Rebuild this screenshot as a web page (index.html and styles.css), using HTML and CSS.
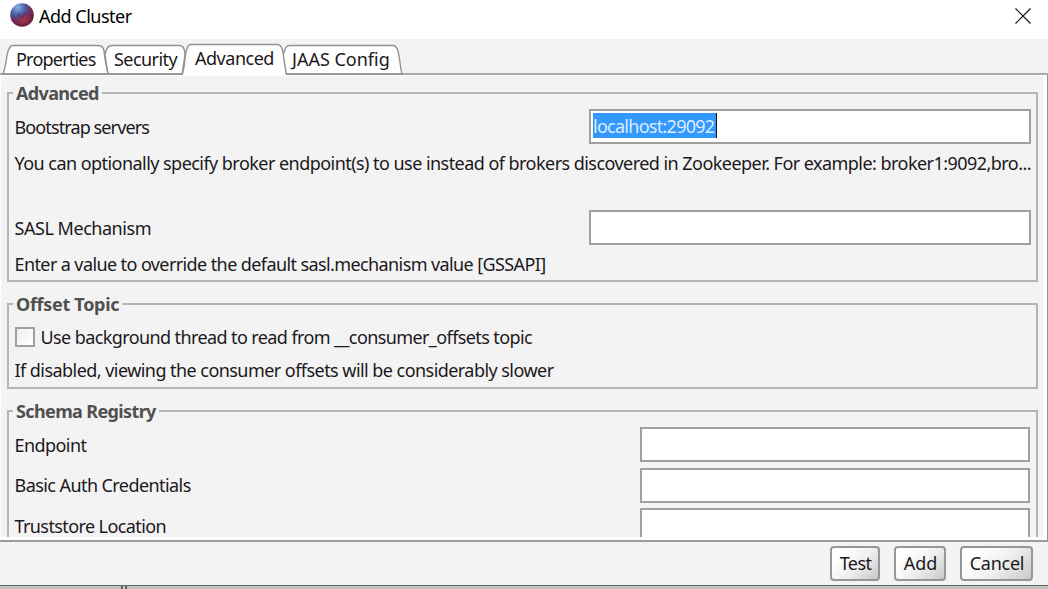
FILE: index.html
```html
<!DOCTYPE html>
<html lang="en">
<head>
<meta charset="utf-8">
<title>Add Cluster</title>
<link rel="stylesheet" href="styles.css">
</head>
<body>
<div class="dialog">
  <header class="titlebar">
    <svg class="logo" width="24" height="24" viewBox="0 0 24 24">
      <defs>
        <radialGradient id="ball" cx="32%" cy="18%" r="85%">
          <stop offset="0" stop-color="#85b4e2"/><stop offset=".4" stop-color="#4a589f"/>
          <stop offset=".7" stop-color="#78284f"/><stop offset="1" stop-color="#5c1a3c"/>
        </radialGradient>
        <radialGradient id="glow"><stop offset="0" stop-color="#b33a4d"/><stop offset="1" stop-color="#94304a" stop-opacity="0"/></radialGradient>
      </defs>
      <circle cx="12" cy="12" r="11.8" fill="url(#ball)"/>
      <ellipse cx="14" cy="17" rx="9" ry="7" fill="url(#glow)"/>
      <path d="M8 10l2 4 3-1 3-3M13 13l1 4" fill="none" stroke="#552c60" stroke-width="1.3" opacity=".6"/>
    </svg>
    <h1 class="title">Add Cluster</h1>
    <svg class="close" width="16" height="16" viewBox="0 0 16 16"><path d="M.5.5l15 15M15.5.5l-15 15" stroke="#111" stroke-width="1.2"/></svg>
  </header>
  <nav class="tabs">
    <svg class="tab-shapes" width="1048" height="36" viewBox="0 39 1048 36">
      <g fill="#fff" stroke="#929292" stroke-width="1.4">
        <path d="M3 74C7 65 6 45.5 13 45.5H98C105 45.5 104 52 105 59L108 74Z"/>
        <path d="M108 74L105 55C106 50 107 45.5 112 45.5H179C184 45.5 185 50 185 55L182 74Z"/>
        <path d="M286 74L283 56C285 49 285 45.5 290 45.5H393C400 45.5 399 63 402 74Z"/>
      </g>
      <path d="M0 74H182M286 74H1048" stroke="#929292" stroke-width="1.6"/>
      <path d="M182 75C186 65 184 44.5 191 44.5H277C283 44.5 283 53 284 60L286.500 75" fill="#fff" stroke="#929292" stroke-width="1.4"/>
    </svg>
    <span class="tab tab-properties">Properties</span>
    <span class="tab tab-security">Security</span>
    <span class="tab tab-advanced">Advanced</span>
    <span class="tab tab-jaas">JAAS Config</span>
  </nav>
  <main class="panel">
    <div class="content">
      <section class="group group-advanced">
        <h2 class="legend legend-advanced">Advanced</h2>
        <div class="row row-first"><span class="w-bootstrap">Bootstrap servers</span><div class="field"><span class="selection">localhost:29092</span></div></div>
        <p class="note note-brokers"><span class="w-brokers">You can optionally specify broker endpoint(s) to use instead of brokers discovered in Zookeeper. For example: broker1:9092,bro...</span></p>
        <div class="row"><span class="w-sasl">SASL Mechanism</span><div class="field"></div></div>
        <p class="note"><span class="w-override">Enter a value to override the default sasl.mechanism value [GSSAPI]</span></p>
      </section>
      <section class="group group-offset">
        <h2 class="legend legend-offset">Offset Topic</h2>
        <div class="check-row"><span class="checkbox"></span><span class="w-thread">Use background thread to read from __consumer_offsets topic</span></div>
        <p class="note note-disabled"><span class="w-disabled">If disabled, viewing the consumer offsets will be considerably slower</span></p>
      </section>
      <section class="group group-schema">
        <h2 class="legend legend-schema">Schema Registry</h2>
        <div class="row"><span class="w-endpoint">Endpoint</span><div class="field"></div></div>
        <div class="row"><span class="w-basic">Basic Auth Credentials</span><div class="field"></div></div>
        <div class="row"><span class="w-trust">Truststore Location</span><div class="field"></div></div>
      </section>
    </div>
  </main>
  <footer class="actions">
    <button class="button button-test">Test</button>
    <button class="button button-add">Add</button>
    <button class="button button-cancel">Cancel</button>
  </footer>
  <div class="backdrop"></div>
</div>
</body>
</html>
```
FILE: styles.css
```css
* { box-sizing: border-box; }
body { margin: 0; font: 18px/24px "Noto Sans", sans-serif; color: #1c1820; letter-spacing: -.57px; }
h1, h2, p { margin: 0; font-weight: 400; }
.dialog { width: 1048px; height: 589px; overflow: hidden; background: #f3f3f3; display: flex; flex-direction: column; white-space: nowrap; }
.titlebar { height: 39px; flex: none; background: #fff; display: flex; align-items: flex-start; padding: 3px 17px 0 10px; }
.title { font-size: 18px; line-height: 27px; margin-left: 5px; color: #000; letter-spacing: -.5px; }
.close { margin: 5px 0 0 auto; }
.tabs { position: relative; height: 36px; flex: none; display: flex; padding: 8px 0 0 16px; }
.tab-shapes { position: absolute; left: 0; top: 0; }
.tab { position: relative; }
.tab-properties { width: 98px; letter-spacing: -.79px; }
.tab-security { width: 81px; }
.tab-advanced { width: 97px; margin-top: -1px; letter-spacing: -.48px; }
.tab-jaas { letter-spacing: 0; }
.panel { height: 465px; flex: none; background: #fff; padding: 1px 4px 3px 1px; border-right: 1px solid #929292; }
.content { height: 461px; overflow: hidden; background: #f3f3f3; padding: 16px 5px 0 6px; }
.group { border: 2px solid #b4b4b4; position: relative; padding-left: 5.5px; }
.group-advanced { height: 190px; padding-right: 5px; }
.group-offset { height: 86px; margin-top: 21px; }
.group-schema { height: 160px; margin-top: 21px; padding: 15px 6px 0 5.5px; }
.legend { position: absolute; left: 4px; top: -13px; background: #f3f3f3; font-size: 18px; line-height: 25px; font-weight: 700; color: #505050; padding: 0 3px; }
.legend-advanced { letter-spacing: -.65px; }
.legend-offset { letter-spacing: -.3px; }
.legend-schema { letter-spacing: -.63px; }
.row { display: flex; justify-content: space-between; align-items: center; height: 35px; }
.row-first { margin-top: 15px; }
.group-schema .row { margin-bottom: 5.5px; }
.field { width: 442px; height: 35px; background: #fff; border: 2px solid #a0a0a0; padding: 2px; }
.group-schema .field { width: 390px; }
.selection { display: block; width: 124px; height: 25px; background: #3399ff; border-right: 1px solid #111; color: #dcecff; line-height: 27px; letter-spacing: -.73px; }
.note { height: 36px; line-height: 38px; }
.note-brokers { height: 66px; }
.w-bootstrap { letter-spacing: -.89px; }
.w-brokers { letter-spacing: -.545px; }
.w-sasl { letter-spacing: -.46px; }
.w-override, .w-thread, .w-trust { letter-spacing: -.6px; }
.w-disabled { letter-spacing: -.55px; }
.check-row { display: flex; align-items: center; height: 24px; margin-top: 20px; }
.checkbox { width: 20px; height: 20px; border: 2px solid #a0a0a0; background: linear-gradient(135deg, #eee, #fff); margin-right: 6px; }
.note-disabled { line-height: 42px; }
.actions { height: 46px; flex: none; border-top: 2px solid #9a9a9a; border-bottom: 1px solid #666; display: flex; justify-content: flex-end; gap: 14px; padding: 4px 15px 0 0; }
.button { height: 35px; padding: 0 0 1px 1px; font: inherit; letter-spacing: inherit; color: inherit; border: 2px solid #969696; border-radius: 4px; background: linear-gradient(135deg, #fff 20%, #f0f0f0 55%, #c8c8c8); }
.button-test { width: 50px; }
.button-add { width: 52px; letter-spacing: 0; }
.button-cancel { width: 73px; letter-spacing: -.25px; }
.backdrop { height: 3px; background: linear-gradient(90deg, #bfc0bf 121px, #666 121px 123px, #ccc 123px 125px, #666 125px 127px, #bfc0bf 127px); }
```
